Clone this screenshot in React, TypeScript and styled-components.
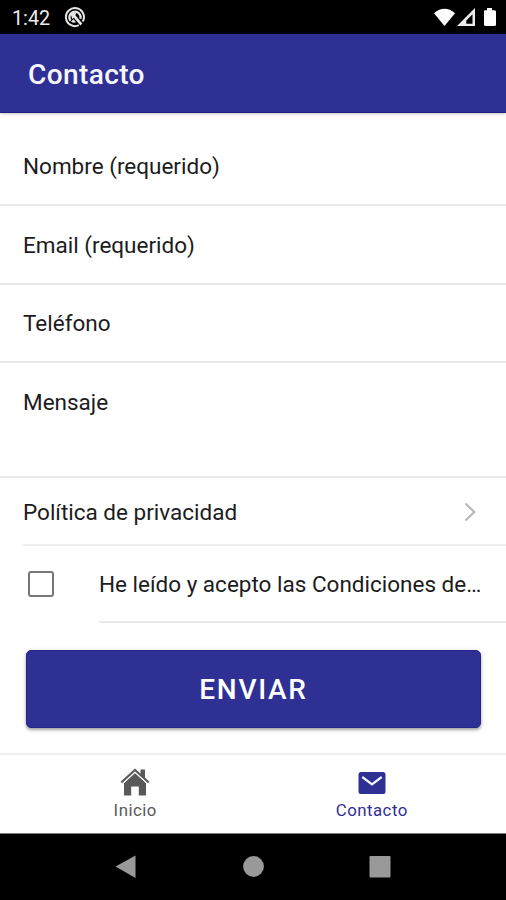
import React from "react";
import styled, { createGlobalStyle } from "styled-components";

const BLUE = "#2f3093";

const GlobalStyle = createGlobalStyle`
  *, *::before, *::after { box-sizing: border-box; }
  body { margin: 0; background: #fff; font-family: Roboto, "Liberation Sans", sans-serif; }
`;

const Screen = styled.div`
  display: flex;
  flex-direction: column;
  width: 506px;
  height: 900px;
  background: #fff;
  color: #1c1c1c;
  overflow: hidden;
`;

const StatusBar = styled.div`
  display: flex;
  align-items: center;
  flex: 0 0 34px;
  padding: 0 9px 0 12px;
  background: #000;
  color: #ececec;
`;

const Clock = styled.span`
  width: 52px;
  padding-top: 3px;
  font-size: 19.8px;
  line-height: 24px;
`;

const StatusIcons = styled.svg`
  display: block;
  margin-left: auto;
`;

const Header = styled.header`
  display: flex;
  align-items: center;
  flex: 0 0 79px;
  padding-left: 28px;
  background: ${BLUE};
  border-bottom: 1px solid #20207f;
  box-shadow: 0 1px 3px rgba(0, 0, 0, 0.22);
`;

const Title = styled.h1`
  margin: 3px 0 0;
  color: #f6f6ff;
  font-size: 28.1px;
  font-weight: 500;
  line-height: 34px;
  letter-spacing: 0.35px;
`;

const Form = styled.form`
  display: flex;
  flex-direction: column;
  flex: 1;
`;

const Field = styled.div<{ $height: number; $top: number }>`
  flex: 0 0 ${(p) => p.$height}px;
  padding: ${(p) => p.$top}px 0 0 23px;
  border-bottom: 2px solid #e9e9e9;
`;

const Label = styled.span`
  display: block;
  font-size: 22.5px;
  line-height: 28px;
  white-space: nowrap;
`;

const LinkRow = styled.div`
  display: flex;
  align-items: center;
  justify-content: space-between;
  flex: 0 0 68px;
  margin-left: 23px;
  padding: 2px 28px 0 0;
  border-bottom: 2px solid #eee;
`;

const CheckRow = styled.div`
  display: flex;
  flex: 0 0 77px;
  padding-left: 28px;
`;

const Checkbox = styled.span`
  width: 26px;
  height: 26px;
  margin: 25px 45px 0 0;
  border: 2px solid #777;
  border-radius: 3px;
`;

const CheckText = styled.div`
  flex: 1;
  padding-top: 24px;
  border-bottom: 2px solid #e9e9e9;
`;

const Submit = styled.button`
  flex: 0 0 78px;
  margin: 27px 25px 0 26px;
  padding: 2px 0 0;
  border: 1px solid #252588;
  border-radius: 5px;
  background: ${BLUE};
  box-shadow: 0 2px 3px rgba(0, 0, 0, 0.32), 0 1px 6px rgba(0, 0, 0, 0.1);
  color: #fff;
  font: 500 28px/34px Roboto, sans-serif;
  letter-spacing: 1.7px;
`;

const Tabs = styled.nav`
  display: flex;
  flex: 0 0 80px;
  padding: 0 16px 0 17px;
  border-top: 2px solid #f1f1f1;
`;

const Tab = styled.div<{ $active?: boolean }>`
  display: flex;
  flex-direction: column;
  align-items: center;
  flex: 1;
  padding-top: 12px;
  color: ${(p) => (p.$active ? BLUE : "#595959")};
`;

const TabLabel = styled.span`
  margin-top: 1px;
  font-size: 16.8px;
  line-height: 20px;
  letter-spacing: 0.5px;
`;

const NavBar = styled.div`
  display: flex;
  justify-content: center;
  flex: 0 0 67px;
  background: #000;
  border-top: 1px solid #777;
`;

export default function App() {
  return (
    <Screen>
      <GlobalStyle />
      <StatusBar>
        <Clock>1:42</Clock>
        <svg width="22" height="22" viewBox="0 0 22 22" fill="none" stroke="#e6e6e6">
          <path d="M14.8 19.2A9 9 0 1 1 18.7 15.6" strokeWidth="2" />
          <path d="M6.6 14.7A5.6 5.6 0 1 1 16.4 12.7" strokeWidth="2.2" />
          <path d="M6.8 8.5Q9.3 5.6 12.7 7L11.2 9.1L18.3 17.6L16.4 19.4L9.8 11.8L8.3 13Z" fill="#e6e6e6" stroke="none" />
          <path d="M7 15.4Q9.3 17.5 12 16.2L9.5 13.2Z" fill="#e6e6e6" stroke="none" />
        </svg>
        <StatusIcons width="64" height="22" viewBox="0 0 64 22" fill="#fff">
          <path d="M1 7.2Q11.5-1.7 22 7.2L11.5 20Z" />
          <path fillRule="evenodd" d="M42 2V20H24ZM39.5 8.2L33.3 14.6V17.7H39.5Z" fill="#ededed" />
          <path d="M51.5 4.2H54V2H59V4.2H61.5Q63 4.2 63 5.8V18.4Q63 20 61.5 20H52.5Q51 20 51 18.4V5.2Z" />
        </StatusIcons>
      </StatusBar>
      <Header>
        <Title>Contacto</Title>
      </Header>
      <Form>
        <Field $height={93} $top={39}><Label>Nombre (requerido)</Label></Field>
        <Field $height={79} $top={25}><Label>Email (requerido)</Label></Field>
        <Field $height={78} $top={24}><Label>Teléfono</Label></Field>
        <Field $height={115} $top={25}><Label>Mensaje</Label></Field>
        <LinkRow>
          <Label>Política de privacidad</Label>
          <svg width="16" height="22" viewBox="0 0 16 22" fill="none" stroke="#bababa" strokeWidth="2.3">
            <path d="M3.5 2.5L12.3 11L3.5 19.5" />
          </svg>
        </LinkRow>
        <CheckRow>
          <Checkbox />
          <CheckText><Label>He leído y acepto las Condiciones de…</Label></CheckText>
        </CheckRow>
        <Submit type="button">ENVIAR</Submit>
      </Form>
      <Tabs>
        <Tab>
          <svg width="32" height="32" viewBox="0 0 32 32" fill="#595959">
            <path d="M16 5.7L27 16V28.5H19.8V19.5H12.2V28.5H5V16Z" />
            <path d="M2.3 15.6L16 3L29.7 15.6" fill="none" stroke="#595959" strokeWidth="2.1" />
            <path d="M21.5 2.5H26V12L21.5 8Z" />
            <path d="M4.3 16.3L16 5.6L27.7 16.3" fill="none" stroke="#fff" strokeWidth="0.9" />
          </svg>
          <TabLabel>Inicio</TabLabel>
        </Tab>
        <Tab $active>
          <svg width="32" height="32" viewBox="0 0 32 32">
            <rect x="2.5" y="5" width="27" height="22" rx="2.5" fill={BLUE} />
            <path d="M6.3 10L16 17.3L25.7 10" fill="none" stroke="#f5f5ff" strokeWidth="2.2" />
          </svg>
          <TabLabel>Contacto</TabLabel>
        </Tab>
      </Tabs>
      <NavBar>
        <svg width="506" height="66" viewBox="0 0 506 66" fill="#999">
          <path d="M115.5 32.5L135.5 21.5V44Z" />
          <circle cx="253.5" cy="32.5" r="10.4" />
          <rect x="369.5" y="22" width="21" height="21.5" rx="1" />
        </svg>
      </NavBar>
    </Screen>
  );
}
